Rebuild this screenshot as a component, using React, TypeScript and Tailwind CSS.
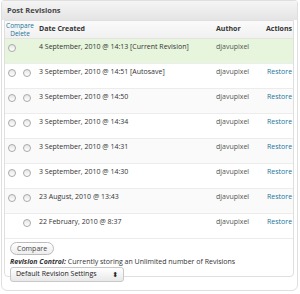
const revisions = [
  { date: "4 September, 2010 @ 14:13 [Current Revision]", current: true, left: true, right: false },
  { date: "3 September, 2010 @ 14:51 [Autosave]", left: true, right: true },
  { date: "3 September, 2010 @ 14:50", left: true, right: true },
  { date: "3 September, 2010 @ 14:34", left: true, right: true },
  { date: "3 September, 2010 @ 14:31", left: true, right: true },
  { date: "3 September, 2010 @ 14:30", left: true, right: true },
  { date: "23 August, 2010 @ 13:43", left: true, right: true },
  { date: "22 February, 2010 @ 8:37", left: false, right: true },
];

function Radio() {
  return (
    <span className="block h-[8px] w-[8px] rounded-full border border-[#a9a9a9] bg-gradient-to-b from-[#e6e6e6] to-white" />
  );
}

export default function App() {
  return (
    <div
      className="h-[294px] w-[300px] bg-white text-[7px] text-[#333]"
      style={{ fontFamily: '"Open Sans", "DejaVu Sans", sans-serif' }}
    >
      <div className="ml-px h-[291px] w-[297px] rounded-b-[6px] rounded-t-[3px] border border-[#dfdfdf] bg-white">
        <div className="flex h-[19px] items-center bg-gradient-to-b from-[#f5f5f5] to-[#e4e4e4] pl-[5px] text-[7.5px] font-bold text-[#464646]">
          Post Revisions
        </div>
        <div className="ml-[2px] h-[257px] w-[290px] rounded-b-[4px] border border-[#dfdfdf] bg-white">
          <div className="flex h-[18px] items-center border-b border-[#e3e3e3] bg-gradient-to-b from-[#fafafa] to-[#f1f1f1] font-bold">
            <div className="flex w-[30px] flex-col items-center text-[6.5px] font-normal leading-[8px] text-[#21759b]">
              <span>Compare</span>
              <span>Delete</span>
            </div>
            <div className="ml-[4px] w-[177px]">Date Created</div>
            <div className="w-[50px]">Author</div>
            <div>Actions</div>
          </div>
          {revisions.map((r, i) => (
            <div
              key={i}
              className={
                "flex h-[25px] items-start border-b border-[#ececec] pt-[3px] leading-[10px] " +
                (r.current ? "bg-[#e6f5dc]" : i % 2 === 0 ? "bg-[#fafafa]" : "bg-white")
              }
            >
              <div className="flex w-[30px] gap-[7px] pl-[3px] pt-[2px]">
                <span className={r.left ? "" : "invisible"}>
                  <Radio />
                </span>
                <span className={r.right ? "" : "invisible"}>
                  <Radio />
                </span>
              </div>
              <div className="ml-[4px] w-[177px]">{r.date}</div>
              <div className="w-[51px] text-[#555]">djavupixel</div>
              <div className="text-[#21759b]">{r.current ? "" : "Restore"}</div>
            </div>
          ))}
          <div className="flex flex-col items-start px-[5px] pt-[3px]">
            <button className="h-[13px] rounded-full border border-[#bbb] bg-gradient-to-b from-white to-[#ededed] px-[6px] text-[7px] leading-[11px] text-[#464646]">
              Compare
            </button>
            <div className="mt-[2px] leading-[9px]">
              <span className="font-bold italic">Revision Control:</span> Currently storing an Unlimited number of Revisions
            </div>
            <div className="mt-[1px] flex h-[15px] w-[114px] items-center justify-between rounded-[3px] border border-[#c8c8c8] bg-gradient-to-b from-white to-[#e8e8e8] px-[5px] text-[#222]">
              <span>Default Revision Settings</span>
              <span className="text-[7px] leading-none">⬍</span>
            </div>
          </div>
        </div>
      </div>
    </div>
  );
}
